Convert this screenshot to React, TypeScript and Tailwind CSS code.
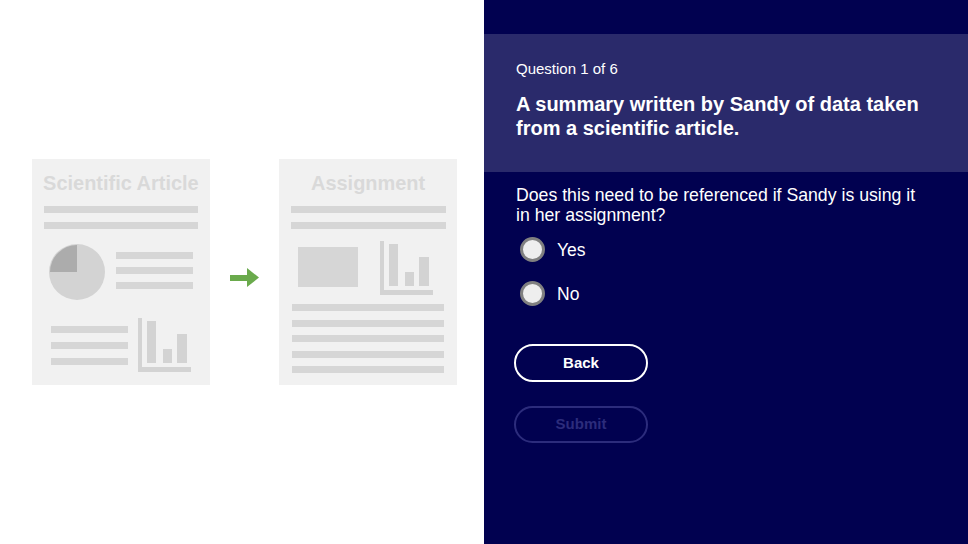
import React from "react";

function BarChart() {
  return (
    <svg width="53" height="54" viewBox="0 0 53 54">
      <rect x="0" y="0" width="4" height="54" fill="#d3d3d3" />
      <rect x="0" y="49" width="53" height="5" fill="#d3d3d3" />
      <rect x="9" y="3" width="9" height="42" fill="#d3d3d3" />
      <rect x="25" y="31" width="9" height="14" fill="#d3d3d3" />
      <rect x="39" y="16" width="10" height="29" fill="#d3d3d3" />
    </svg>
  );
}

function Pie() {
  return (
    <svg width="56" height="56" viewBox="0 0 56 56">
      <circle cx="28" cy="28" r="28" fill="#d3d3d3" />
      <path d="M28 28 L1 28 A27 27 0 0 1 28 1 Z" fill="#acacac" />
    </svg>
  );
}

const Bar = ({ w }: { w: string }) => <div className={`h-[7px] bg-[#d6d6d6] ${w}`} />;

function DocTitle({ children }: { children: React.ReactNode }) {
  return (
    <div className="mt-[13px] h-[21px] flex justify-center">
      <div
        className="text-[21px] leading-[21px] font-bold text-[#d9d9d9] whitespace-nowrap scale-x-[0.95]"
        style={{ fontFamily: '"Liberation Sans", Arial, sans-serif' }}
      >
        {children}
      </div>
    </div>
  );
}

export default function App() {
  return (
    <div
      className="flex w-[968px] h-[544px] overflow-hidden"
      style={{ fontFamily: '"Liberation Sans", Arial, sans-serif' }}
    >
      {/* Left illustration */}
      <div className="w-[484px] h-full bg-white flex items-center pl-[32px]">
        {/* Scientific article */}
        <div className="w-[178px] h-[226px] bg-[#f1f1f1] flex flex-col">
          <DocTitle>Scientific Article</DocTitle>
          <div className="mt-[13px] px-[12px] flex flex-col gap-[9px]">
            <Bar w="w-[154px]" />
            <Bar w="w-[154px]" />
          </div>
          <div className="mt-[15px] flex pl-[17px]">
            <Pie />
            <div className="ml-[11px] mt-[8px] flex flex-col gap-[8px]">
              <Bar w="w-[77px]" />
              <Bar w="w-[77px]" />
              <Bar w="w-[77px]" />
            </div>
          </div>
          <div className="mt-[18px] flex pl-[19px]">
            <div className="mt-[8px] flex flex-col gap-[9px]">
              <Bar w="w-[77px]" />
              <Bar w="w-[77px]" />
              <Bar w="w-[77px]" />
            </div>
            <div className="ml-[10px]">
              <BarChart />
            </div>
          </div>
        </div>

        {/* Arrow */}
        <div className="ml-[20px] mt-[11px] w-[29px] h-[19px]">
          <svg width="29" height="19" viewBox="0 0 29 19">
            <rect x="0" y="7" width="18" height="6" fill="#6aaa4c" />
            <path d="M17 0 L29 9.5 L17 19 Z" fill="#6aaa4c" />
          </svg>
        </div>

        {/* Assignment */}
        <div className="ml-[20px] w-[178px] h-[226px] bg-[#f1f1f1] flex flex-col">
          <DocTitle>Assignment</DocTitle>
          <div className="mt-[13px] px-[12px] flex flex-col gap-[9px]">
            <Bar w="w-[155px]" />
            <Bar w="w-[155px]" />
          </div>
          <div className="mt-[12px] flex pl-[19px]">
            <div className="mt-[6px] w-[60px] h-[40px] bg-[#d6d6d6]" />
            <div className="ml-[22px]">
              <BarChart />
            </div>
          </div>
          <div className="mt-[9px] pl-[13px] flex flex-col gap-[8.5px]">
            <Bar w="w-[152px]" />
            <Bar w="w-[152px]" />
            <Bar w="w-[152px]" />
            <Bar w="w-[152px]" />
            <Bar w="w-[152px]" />
          </div>
        </div>
      </div>

      {/* Right quiz panel */}
      <div className="w-[484px] h-full bg-[#010150] pt-[34px] text-white">
        <div className="bg-[#2a2a6b] pl-[32px] pt-[27px] pb-[32px]">
          <div className="text-[15px] leading-[16px]">Question 1 of 6</div>
          <div className="mt-[15px] text-[20px] leading-[24px] font-bold w-[430px]">
            A summary written by Sandy of data taken from a scientific article.
          </div>
        </div>
        <div className="pl-[32px] pr-[40px]">
          <div className="mt-[13px] text-[17.7px] leading-[20px] w-[410px]">
            Does this need to be referenced if Sandy is using it in her assignment?
          </div>
          <div className="mt-[12px] pl-[4px] flex flex-col gap-[19px]">
            {["Yes", "No"].map((l) => (
              <div key={l} className="flex items-center h-[25px]">
                <div className="w-[25px] h-[25px] rounded-full border-[3px] border-[#808080] bg-[#eeeeee]" />
                <span className="ml-[12px] text-[17.5px] leading-[20px]">{l}</span>
              </div>
            ))}
          </div>
          <div className="mt-[38px] -ml-[2px] flex flex-col gap-[24px]">
            <button className="w-[134px] h-[38px] rounded-full border-2 border-white text-[15px] font-bold text-white">
              Back
            </button>
            <button className="w-[134px] h-[37px] rounded-full border-2 border-[#2c2c7c] text-[15px] font-bold text-[#2c2c7c]">
              Submit
            </button>
          </div>
        </div>
      </div>
    </div>
  );
}
